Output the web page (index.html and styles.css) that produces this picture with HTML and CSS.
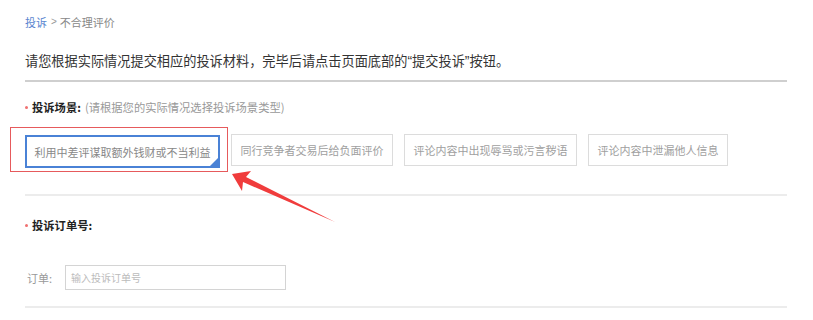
FILE: index.html
```html
<!DOCTYPE html>
<html lang="zh">
<head>
<meta charset="utf-8">
<link rel="stylesheet" href="styles.css">
</head>
<body>
<div class="page">
  <div class="crumb"><a class="crumb-link">投诉</a><span class="crumb-sep">&gt;</span><span>不合理评价</span></div>
  <div class="title">请您根据实际情况提交相应的投诉材料，完毕后请点击页面底部的<span class="q">“</span>提交投诉<span class="q">”</span>按钮。</div>
  <div class="rule"></div>

  <div class="label"><span class="dot"></span><b>投诉场景:</b><span class="hint">(请根据您的实际情况选择投诉场景类型)</span></div>
  <div class="options">
    <div class="opt selected">利用中差评谋取额外钱财或不当利益<span class="corner"></span></div>
    <div class="opt">同行竞争者交易后给负面评价</div>
    <div class="opt">评论内容中出现辱骂或污言秽语</div>
    <div class="opt">评论内容中泄漏他人信息</div>
    <div class="mark"></div>
  </div>
  <div class="divider"></div>

  <div class="label label2"><span class="dot"></span><b>投诉订单号:</b></div>
  <div class="order">
    <span class="order-label">订单:</span>
    <div class="input">输入投诉订单号</div>
  </div>
  <div class="divider divider2"></div>

  <svg class="arrow" width="813" height="320" viewBox="0 0 813 320">
    <polygon points="232,174 251,171 246,177 335,222 243,182 242,191" fill="#f03c3c"/>
  </svg>
</div>
</body>
</html>
```

FILE: styles.css
```css
html, body { margin: 0; padding: 0; background: #fff; }
body { font-family: "Noto Sans CJK SC", "Noto Sans", sans-serif; color: #333; }
.page { position: relative; width: 762px; padding-left: 25px; height: 320px; overflow: hidden; }

.crumb { margin-top: 14px; font-size: 11px; line-height: 16px; color: #888; display: flex; align-items: center; }
.crumb-link { color: #5b86cf; }
.crumb-sep { margin: 0 3px 0 4px; color: #999; font-family: "Liberation Sans", sans-serif; font-size: 10px; }

.title { margin-top: 21px; font-size: 13.2px; line-height: 20px; color: #333; white-space: nowrap; }
.q { font-family: "Liberation Sans", sans-serif; font-size: 14px; }
.rule { margin-top: 9px; height: 2px; background: #cfcfcf; }

.label { margin-top: 17px; font-size: 11.3px; line-height: 16px; display: flex; align-items: center; color: #222; }
.label b { font-weight: 700; }
.dot { width: 3px; height: 3px; border-radius: 50%; background: #f07070; margin: 0 4px 0 0; }
.hint { color: #999; margin-left: 4px; }

.options { position: relative; margin-top: 19px; display: flex; gap: 11px; }
.opt { position: relative; height: 30px; line-height: 30px; padding: 0 8.5px; border: 1px solid #dcdcdc; font-size: 11px; color: #a0a0a0; white-space: nowrap; }
.opt.selected { border: 2px solid #4a82d6; padding: 0 7.5px; height: 29px; margin-top: 1px; color: #888; }
.corner { position: absolute; right: 0; bottom: 0; width: 0; height: 0; border-style: solid; border-width: 0 0 8px 8px; border-color: transparent transparent #4a82d6 transparent; }
.mark { position: absolute; left: -15px; top: -7px; width: 216px; height: 43px; border: 1.5px solid #e65a5c; }

.divider { margin-top: 26px; height: 2px; background: #ececec; }
.label2 { margin-top: 21px; }

.order { margin-top: 32px; display: flex; align-items: center; }
.order-label { font-size: 11px; color: #999; width: 38px; margin-left: 2px; }
.input { width: 214px; height: 23px; line-height: 23px; border: 1px solid #d4d4d4; padding-left: 5px; font-size: 10px; color: #bbb; }
.divider2 { margin-top: 16px; }

.arrow { position: absolute; left: 0; top: 0; pointer-events: none; }
```
